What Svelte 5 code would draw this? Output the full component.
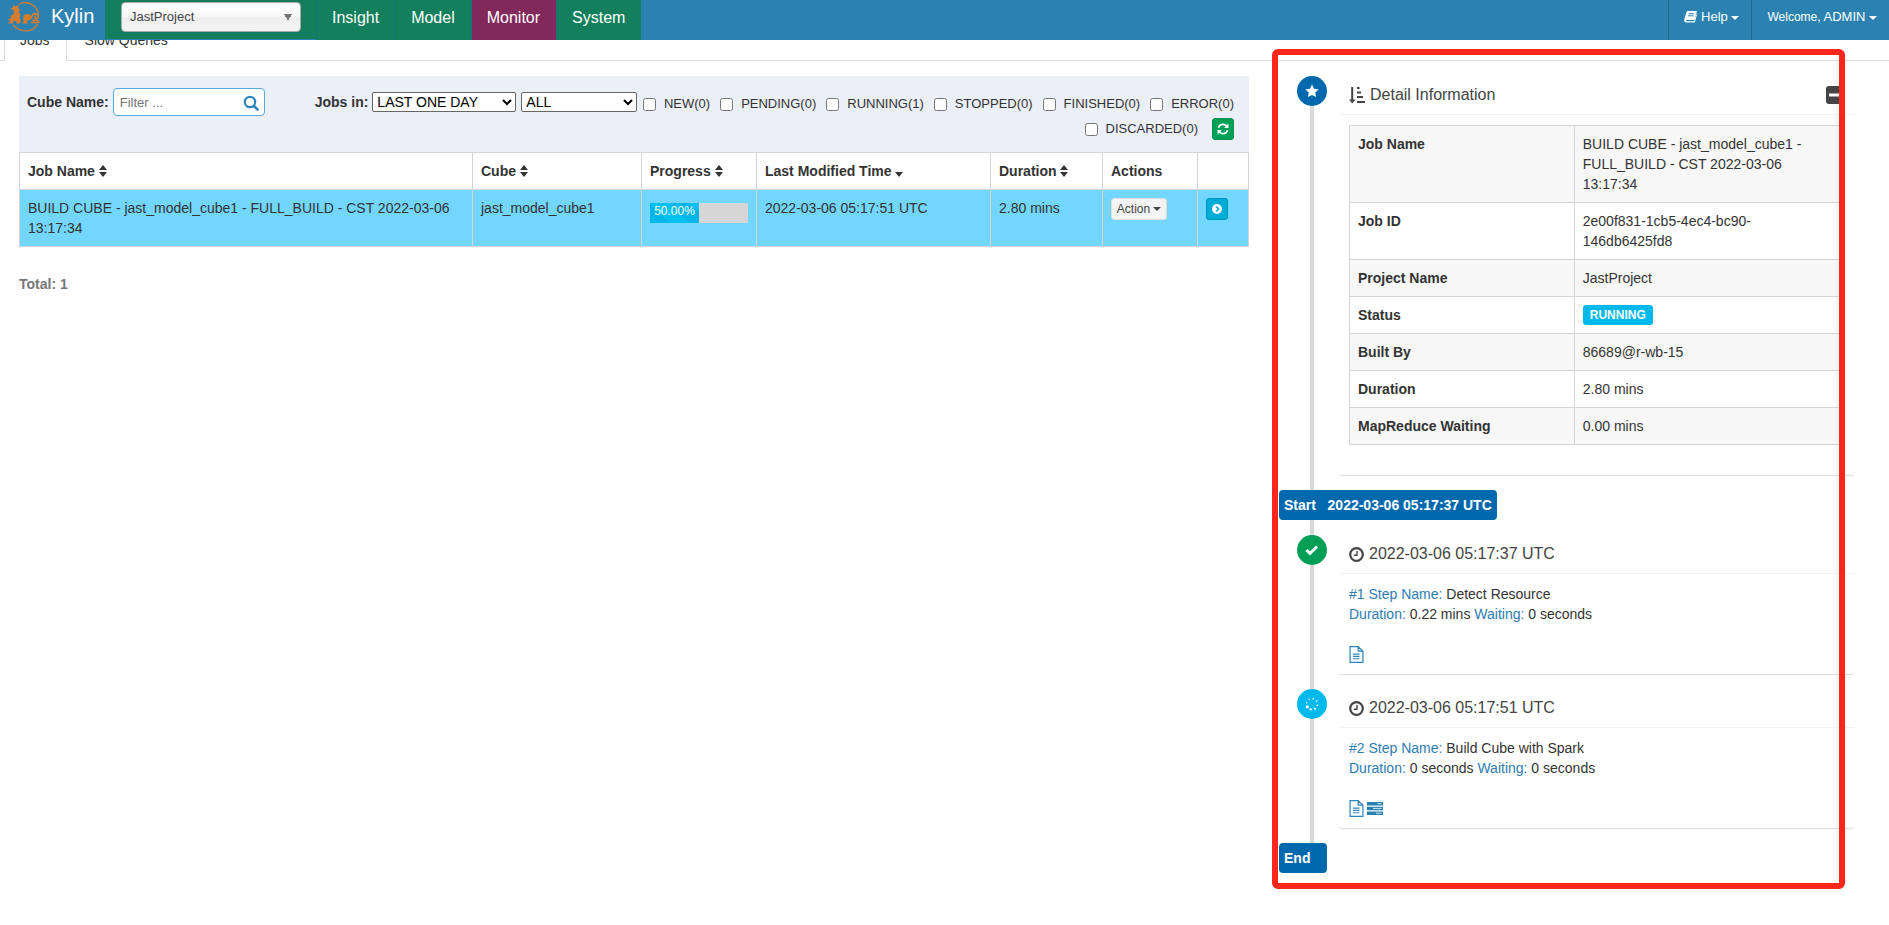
<script>
  let project = 'JastProject'
  let filter = ''
  const nav = ['Insight', 'Model', 'Monitor', 'System']
  const statuses = ['NEW(0)', 'PENDING(0)', 'RUNNING(1)', 'STOPPED(0)', 'FINISHED(0)', 'ERROR(0)', 'DISCARDED(0)']
  const columns = [
    { title: 'Job Name', sort: 'both' },
    { title: 'Cube', sort: 'both' },
    { title: 'Progress', sort: 'both' },
    { title: 'Last Modified Time', sort: 'down' },
    { title: 'Duration', sort: 'both' },
    { title: 'Actions' },
    { title: '' }
  ]
  const job = {
    name: 'BUILD CUBE - jast_model_cube1 - FULL_BUILD - CST 2022-03-06 13:17:34',
    cube: 'jast_model_cube1',
    progress: 50,
    modified: '2022-03-06 05:17:51 UTC',
    duration: '2.80 mins'
  }
  const details = [
    ['Job Name', job.name],
    ['Job ID', '2e00f831-1cb5-4ec4-bc90-146db6425fd8'],
    ['Project Name', 'JastProject'],
    ['Status', 'RUNNING'],
    ['Built By', '86689@r-wb-15'],
    ['Duration', job.duration],
    ['MapReduce Waiting', '0.00 mins']
  ]
  const steps = [
    { id: 1, time: '2022-03-06 05:17:37 UTC', name: 'Detect Resource', duration: '0.22 mins', waiting: '0 seconds', done: true },
    { id: 2, time: '2022-03-06 05:17:51 UTC', name: 'Build Cube with Spark', duration: '0 seconds', waiting: '0 seconds', done: false }
  ]
  // spinner dots, clockwise from the top, with the heavy ones at the bottom left
  const sizes = [0.8, 0.8, 0.9, 1, 1.2, 1.7, 0.8, 0.8]
  const dots = sizes.map((r, i) => ({
    x: 8 + 5.5 * Math.sin(((i + 0.3) * Math.PI) / 4),
    y: 8 - 5.5 * Math.cos(((i + 0.3) * Math.PI) / 4),
    r
  }))
</script>

<header class="navbar">
  <a class="brand" href="#/">
    <svg width="36" height="34" viewBox="6 0 36 34" fill="none" stroke="#d67c2b">
      <path d="M19 4C27 0 37 5 38.500 14M37.500 24C34 32 22 34 13 25" stroke-width="1.300" />
      <path d="M10.500 9L13 7 13 4.500 15 6.500 19 4.500 18 8 20 9.500 18.500 12 20.500 14.500 19.500 17.500 21 20 20 23.500 16 23.500 17 21.500 13.500 20.500 13 23.500 8 23.500 10 21.500 8.500 19 11 18.500 10.500 16 14 13.500 13.500 10z" fill="#d67c2b" stroke="none" />
      <path d="M22 23.500q2-1 1.500-3.500-1.500-5 3-6 5-.500 4.500 4-1 2-3.500 2.500l0 3z" fill="#d67c2b" stroke="none" />
      <path d="M29 19.500c3 0 2-5.500 6-5.800 4 0 4.500 5 1 4.600-1.500-.300-1-2-.200-1.800M31 22.500h7.500c.500-2.500-3-3-6-1.800" stroke-width="1.700" />
    </svg>
    <span>Kylin</span>
  </a>
  <div class="project">
    <select bind:value={project} aria-label="Project">
      <option>JastProject</option>
    </select>
  </div>
  <nav>
    {#each nav as item}
      <a href="#/{item}" class:active={item === 'Monitor'}>{item}</a>
    {/each}
  </nav>
  <div class="user">
    <a href="#/help">
      <svg width="13" height="12" viewBox="0 0 13 12">
        <path d="M4 0h8.300q.7.200.5 1L10.500 9H2.500q-1 .7 0 1.300h7.700L12.500 3l.5.500-2.200 8H2Q-.3 11 .300 8.500L2.500 1Q3 0 4 0z" fill="#fff" />
        <path d="M4.500 2.800h5.500M4 4.800h5.500" stroke="#2b82b0" />
      </svg>
      Help <i class="caret"></i>
    </a>
    <a href="#/user"><small>Welcome,</small> ADMIN <i class="caret"></i></a>
  </div>
</header>

<ul class="tabs">
  <li class="active"><a href="#/jobs">Jobs</a></li>
  <li><a href="#/slow">Slow Queries</a></li>
</ul>

<main>
  <section class="jobs">
    <form class="filters">
      <label class="bold" for="cube">Cube Name:</label>
      <div class="search">
        <input id="cube" type="text" placeholder="Filter ..." bind:value={filter} />
        <button type="button" aria-label="Search">
          <svg width="16" height="16" viewBox="0 0 16 16" fill="none" stroke="#2f84bd">
            <circle cx="7" cy="7" r="5.200" stroke-width="2.200" />
            <path d="M11 11l3.500 3.500" stroke-width="2.600" stroke-linecap="round" />
          </svg>
        </button>
      </div>
      <label class="bold range" for="range">Jobs in:</label>
      <select id="range"><option>LAST ONE DAY</option></select>
      <select class="kind" aria-label="Job type"><option>ALL</option></select>
      <div class="statuses">
        {#each statuses as status}
          <label><input type="checkbox" />{status}</label>
        {/each}
        <button type="button" class="btn green" aria-label="Refresh">
          <svg width="12" height="12" viewBox="0 0 12 12" fill="none" stroke="#fff" stroke-width="1.700">
            <path d="M1.500 4.800A4.600 4.600 0 0 1 9.500 3M10.500 7.200A4.600 4.600 0 0 1 2.500 9" />
            <path d="M11.500.500v4.500H7zM.500 11.500V7H5z" fill="#fff" stroke="none" />
          </svg>
        </button>
      </div>
    </form>

    <table class="list">
      <colgroup>
        <col class="c-name" /><col class="c-cube" /><col class="c-progress" /><col class="c-time" /><col class="c-duration" /><col class="c-actions" /><col />
      </colgroup>
      <thead>
        <tr>
          {#each columns as column}
            <th>
              {column.title}
              {#if column.sort}
                <svg width="8" height="12" viewBox="0 0 8 12" fill="#333">
                  {#if column.sort === 'both'}<path d="M0 5l4-5 4 5z" />{/if}
                  <path d="M0 7l4 5 4-5z" />
                </svg>
              {/if}
            </th>
          {/each}
        </tr>
      </thead>
      <tbody>
        <tr>
          <td>{job.name}</td>
          <td>{job.cube}</td>
          <td>
            <div class="progress"><div style="width: {job.progress}%">{job.progress.toFixed(2)}%</div></div>
          </td>
          <td>{job.modified}</td>
          <td>{job.duration}</td>
          <td><button type="button" class="btn action">Action <i class="caret"></i></button></td>
          <td>
            <button type="button" class="btn blue" aria-label="Show detail">
              <svg width="10" height="10" viewBox="0 0 10 10">
                <circle cx="5" cy="5" r="5" fill="#fff" />
                <path d="M4 2.500L6.500 5 4 7.500" fill="none" stroke="#00acd6" stroke-width="1.600" />
              </svg>
            </button>
          </td>
        </tr>
      </tbody>
    </table>
    <p class="total">Total: 1</p>
  </section>

  <aside>
    <ul class="timeline">
      <li class="item">
        <span class="dot star">
          <svg width="14" height="14" viewBox="0 0 14 14" fill="#fff">
            <path d="M7 .500l2 4.200 4.600.600-3.400 3.200.900 4.600L7 10.900l-4.100 2.200.900-4.600L.400 5.300 5 4.700z" />
          </svg>
        </span>
        <div class="panel">
          <h3>
            <svg width="16" height="17" viewBox="0 0 16 17" fill="#444">
              <path d="M2.200 0h2v12.500h2.300L3.200 16.500 0 12.500h2.200zM8 0h2.500v2H8zM8 4.500h4v2H8zM8 9h6v2H8zM8 14h8v2H8z" />
            </svg>
            Detail Information
            <button type="button" class="collapse" aria-label="Collapse">
              <svg width="18" height="18" viewBox="0 0 18 18">
                <rect width="18" height="18" rx="3" fill="#444" />
                <rect x="3" y="7.500" width="12" height="3" fill="#fff" />
              </svg>
            </button>
          </h3>
          <div class="body">
            <table class="detail">
              <tbody>
                {#each details as [label, value]}
                  <tr>
                    <th scope="row">{label}</th>
                    <td>{#if label === 'Status'}<span class="badge">{value}</span>{:else}{value}{/if}</td>
                  </tr>
                {/each}
              </tbody>
            </table>
          </div>
        </div>
      </li>
      <li class="label">Start &nbsp; 2022-03-06 05:17:37 UTC</li>
      {#each steps as step}
        <li class="item">
          <span class="dot" class:done={step.done} class:running={!step.done}>
            {#if step.done}
              <svg width="14" height="12" viewBox="0 0 14 12">
                <path d="M1.500 6l3.500 3.500L12 2.500" fill="none" stroke="#fff" stroke-width="3" />
              </svg>
            {:else}
              <svg width="16" height="16" viewBox="0 0 16 16" fill="#fff">
                {#each dots as dot}<circle cx={dot.x} cy={dot.y} r={dot.r} />{/each}
              </svg>
            {/if}
          </span>
          <div class="panel">
            <h3>
              <svg width="15" height="15" viewBox="0 0 15 15" fill="none" stroke="#444">
                <circle cx="7.500" cy="7.500" r="6.300" stroke-width="2.200" />
                <path d="M8 4v4.200H4.800" stroke-width="1.400" />
              </svg>
              {step.time}
            </h3>
            <div class="body">
              <div><b>#{step.id} Step Name:</b> {step.name}</div>
              <div><b>Duration:</b> {step.duration} <b>Waiting:</b> {step.waiting}</div>
              <div class="links">
                <a href="#/log" aria-label="Log">
                  <svg width="15" height="17" viewBox="0 0 15 18" fill="none" stroke="#2f84bd" stroke-width="1.300">
                    <path d="M.700.700h8.600l5 4.800v11.800H.700zM9.300.700v4.800h5M3.700 8.500h7M3.700 11h7M3.700 13.500h7" />
                  </svg>
                </a>
                {#if !step.done}
                  <a href="#/tracking" aria-label="Tracking">
                    <svg width="16" height="13" viewBox="0 0 16 13">
                      <path d="M0 0h16v3.500H0zM0 4.700h16v3.500H0zM0 9.500h16V13H0z" fill="#2b82b0" />
                      <path d="M10.500 1.700h4M6 6.400h8.500M9 11.200h5.500" stroke="#d5e8f3" />
                    </svg>
                  </a>
                {/if}
              </div>
            </div>
          </div>
        </li>
      {/each}
      <li class="label">End &nbsp;&nbsp;</li>
    </ul>
    <div class="highlight"></div>
  </aside>
</main>

<style>
  :global(body) {
    background: #fff;
    color: #333;
    font: 14px/20px "Liberation Sans", Arial, sans-serif;
  }
  :global(#app) *,
  .navbar {
    box-sizing: border-box;
  }
  a {
    color: inherit;
    text-decoration: none;
  }
  ul {
    list-style: none;
    margin: 0;
    padding: 0;
  }
  input,
  select,
  button {
    font-family: inherit;
    margin: 0;
  }
  .caret {
    display: inline-block;
    border: 4px solid transparent;
    border-top-color: currentColor;
    border-bottom: 0;
    vertical-align: middle;
  }

  .navbar {
    position: relative;
    z-index: 2;
    display: flex;
    height: 40px;
    background: #2b82b0;
    color: #fff;
  }
  .brand {
    display: flex;
    gap: 9px;
    width: 105px;
    padding-left: 6px;
    font-size: 20px;
    line-height: 33px;
  }
  .project {
    width: 211px;
    height: 39px;
    padding: 2px 16px;
    background: #137f5c;
  }
  .project select {
    appearance: none;
    width: 180px;
    height: 30px;
    padding: 0 8px 1px;
    border: 1px solid #aaa;
    border-radius: 4px;
    background:
      conic-gradient(from -30deg at 50% 100%, #777 60deg, transparent 0) right 8px top 11px / 8px 7px no-repeat,
      linear-gradient(#fff 20%, #f6f6f6 50%, #eee 52%, #f4f4f4);
    color: #444;
    font-size: 13px;
  }
  nav {
    display: flex;
  }
  nav a {
    padding: 0 16px 0 15px;
    border-left: 1px solid #1c6f80;
    background: #137f5c;
    font-size: 16px;
    line-height: 35px;
  }
  nav .active {
    background: #82285b;
  }
  .user {
    display: flex;
    margin-left: auto;
    font-size: 13px;
    line-height: 33px;
  }
  .user a {
    padding: 0 12px 0 15px;
    border-left: 1px solid #23698e;
  }
  .user svg {
    vertical-align: -2px;
  }
  .user small {
    font-size: 12px;
  }

  .tabs {
    display: flex;
    height: 21px;
    padding-left: 4px;
    border-bottom: 1px solid #ddd;
  }
  .tabs li {
    display: flex;
    align-items: flex-end;
    height: 21px;
    padding: 0 19px 11px 18px;
  }
  .tabs .active {
    padding: 0 16px 11px 15px;
    border: 1px solid #ddd;
    border-width: 0 1px;
    background: #fff;
  }

  main {
    display: grid;
    grid-template-columns: 1230fr 575fr;
    gap: 30px;
    align-items: start;
    padding: 15px 35px 0 19px;
  }

  .filters {
    display: flex;
    height: 76px;
    padding: 12px 15px 0 8px;
    background: #ebeff8;
  }
  .bold {
    padding-top: 4px;
    font-weight: bold;
    white-space: nowrap;
  }
  .search {
    display: flex;
    align-items: center;
    width: 152px;
    height: 28px;
    margin-left: 4px;
    padding: 0 5px 0 6px;
    border: 1px solid #56a9dd;
    border-radius: 4px;
    background: #fff;
  }
  .search input {
    flex: 1;
    min-width: 0;
    padding: 0;
    border: 0;
    outline: 0;
    font-size: 13px;
  }
  .search button {
    display: flex;
    padding: 2px 0 0;
    border: 0;
    background: none;
  }
  .range {
    margin-left: 50px;
    margin-right: 4px;
  }
  .filters select {
    width: 144px;
    height: 20px;
    margin-top: 4px;
    padding: 0;
    border: 1px solid #666;
    border-radius: 2px;
    background-color: #fff;
    color: #000;
    font-size: 14px;
  }
  .filters .kind {
    width: 116px;
    margin-left: 5px;
  }
  .statuses {
    flex: 1;
    display: flex;
    flex-wrap: wrap;
    justify-content: flex-end;
    align-content: flex-start;
    align-items: center;
    gap: 4px 10px;
    padding-top: 6px;
    font-size: 13px;
  }
  .statuses label {
    display: flex;
    align-items: center;
    gap: 8px;
  }
  .statuses input {
    width: 13px;
    height: 13px;
  }
  .btn {
    display: inline-flex;
    align-items: center;
    justify-content: center;
    width: 22px;
    height: 22px;
    padding: 0;
    border: 1px solid;
    border-radius: 3px;
    vertical-align: top;
  }
  .green {
    margin-left: 4px;
    border-color: #008d4c;
    background: #00a157;
  }
  .blue {
    border-color: #0097bc;
    background: #00acd6;
  }
  .action {
    gap: 3px;
    width: 56px;
    border-color: #ddd;
    background: #f4f4f4;
    color: #444;
    font-size: 12px;
  }

  table {
    width: 100%;
    border-collapse: collapse;
    table-layout: fixed;
  }
  th,
  td {
    padding: 8px;
    border: 1px solid #d5d5d5;
    text-align: left;
    vertical-align: top;
  }
  .list th svg {
    vertical-align: -1px;
  }
  .list tbody {
    background: #72d6ff;
  }
  .c-name {
    width: 453px;
  }
  .c-cube {
    width: 169px;
  }
  .c-progress {
    width: 115px;
  }
  .c-time {
    width: 234px;
  }
  .c-duration {
    width: 112px;
  }
  .c-actions {
    width: 95px;
  }
  .progress {
    height: 20px;
    margin-top: 5px;
    background: #d6d6d6;
  }
  .progress div {
    height: 20px;
    background: linear-gradient(45deg, #00c0ef 25%, #00b5e8 25%, #00b5e8 50%, #00c0ef 50%, #00c0ef 75%, #00b5e8 75%) 0 0 / 40px 40px;
    color: #fff;
    font-size: 12px;
    line-height: 17px;
    text-align: center;
  }
  .total {
    margin: 27px 0 0;
    color: #777;
    font-weight: bold;
  }

  aside {
    position: relative;
    padding-bottom: 16px;
  }
  .timeline {
    display: flex;
    flex-direction: column;
    align-items: flex-start;
    gap: 15px;
    background: linear-gradient(#d9d9d9, #d9d9d9) 31px 0 / 4px 100% no-repeat;
  }
  .item {
    display: flex;
    align-items: flex-start;
    gap: 12px;
    width: 100%;
    padding-left: 18px;
  }
  .dot {
    display: flex;
    flex: none;
    align-items: center;
    justify-content: center;
    width: 30px;
    height: 30px;
    border-radius: 50%;
  }
  .star {
    background: #0069ad;
  }
  .done {
    background: #009f57;
  }
  .running {
    background: #00b9ec;
  }
  .panel {
    flex: 1;
    min-width: 0;
    border-radius: 3px;
    background: #fff;
    box-shadow: 0 1px 1px rgba(0, 0, 0, 0.14);
  }
  .panel h3 {
    display: flex;
    align-items: center;
    gap: 5px;
    margin: 0;
    padding: 10px;
    border-bottom: 1px solid #f2f2f2;
    color: #444;
    font-size: 16px;
    font-weight: normal;
    line-height: 18px;
  }
  .collapse {
    display: flex;
    margin-left: auto;
    padding: 0;
    border: 0;
    background: none;
  }
  .body {
    padding: 10px;
  }
  .body b {
    color: #2f7cb3;
    font-weight: normal;
  }
  .detail {
    margin-bottom: 20px;
  }
  .detail th {
    width: 45.5%;
  }
  .detail tr:nth-child(odd) {
    background: #f7f7f7;
  }
  .badge {
    display: block;
    width: fit-content;
    padding: 0 7px;
    border-radius: 3px;
    background: #00b9ec;
    color: #fff;
    font-size: 12px;
    font-weight: bold;
  }
  .links {
    display: flex;
    align-items: center;
    gap: 3px;
    height: 20px;
    margin-top: 20px;
  }
  .links a {
    display: flex;
  }
  .label {
    padding: 5px;
    border-radius: 4px;
    background: #0069ad;
    color: #fff;
    font-weight: bold;
    white-space: pre;
  }
  /* marker frame drawn over the timeline */
  .highlight {
    position: absolute;
    inset: -27px 9px 0 -7px;
    border: 6px solid #ff261c;
    border-radius: 6px;
    pointer-events: none;
  }
</style>
